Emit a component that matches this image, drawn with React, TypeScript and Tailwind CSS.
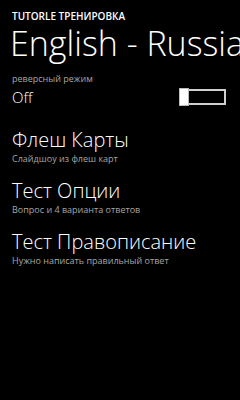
import React from "react";

const items = [
    {title: "Флеш Карты", sub: "Слайдшоу из флеш карт"},
    {title: "Тест Опции", sub: "Вопрос и 4 варианта ответов"},
    {title: "Тест Правописание", sub: "Нужно написать правильный ответ"},
];

const Toggle = () => {
    return (
        <div className="flex items-center mr-[14px]">
            <div className="w-[10px] h-[18px] bg-white border border-[#bbbbbb]"/>
            <div className="w-[37px] h-[16px] border-2 border-[#d0d0d0] border-l-0"/>
        </div>
    )
}

const App = () => {
    return (
        <div className="w-[240px] h-[400px] bg-black text-white overflow-hidden" style={{fontFamily: '"Open Sans", "Noto Sans", sans-serif'}}>
            <div className="pl-[12px] pt-[9px] text-[10px] leading-[14px] font-semibold">TUTORLE ТРЕНИРОВКА</div>
            <div className="pl-[10px] text-[34px] leading-[40px] font-light whitespace-nowrap">English - Russian</div>
            <div className="pl-[12px] mt-[10px] text-[9px] leading-[12px] text-[#a6a6a6]">реверсный режим</div>
            <div className="flex items-center justify-between pl-[12px] mt-[2px]">
                <span className="text-[15px] leading-[20px] font-light">Off</span>
                <Toggle/>
            </div>
            <div className="flex flex-col gap-[13px] pl-[12px] mt-[20px]">
                {items.map((it) => (
                    <div key={it.title} className="flex flex-col">
                        <span className="text-[20px] leading-[26px] font-light">{it.title}</span>
                        <span className="text-[9px] leading-[12px] text-[#a6a6a6]">{it.sub}</span>
                    </div>
                ))}
            </div>
        </div>
    )
}

export default App;
